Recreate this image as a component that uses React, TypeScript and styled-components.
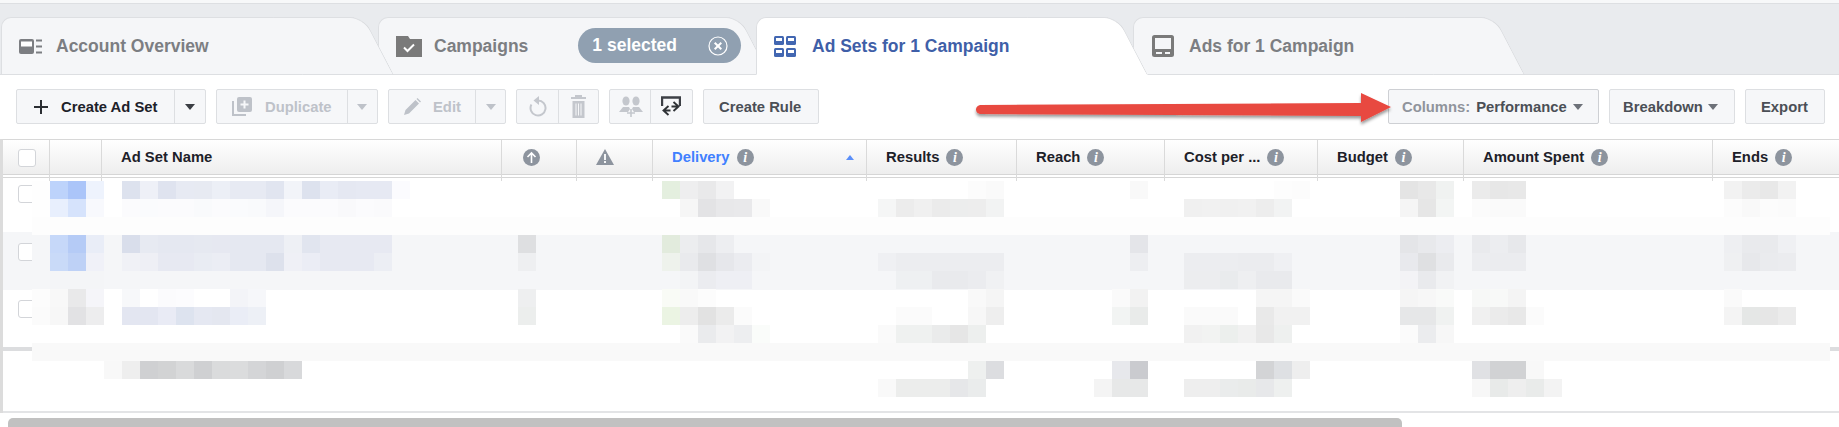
import React from 'react';
import styled, { createGlobalStyle } from 'styled-components';

const GlobalStyle = createGlobalStyle`
  html, body { margin: 0; padding: 0; background: #fff; overflow: hidden; }
  body { font-family: "Liberation Sans", Arial, sans-serif; width: 1839px; height: 427px; }
  * { box-sizing: border-box; }
`;

const Page = styled.div`width: 1839px; height: 427px; position: relative; overflow: hidden; background: #fff;`;
const TopStrip = styled.div`height: 4px; background: #f7f8f9; border-bottom: 1px solid #dddfe2;`;

const TabBar = styled.div`display: flex; height: 71px; padding-top: 13px; background: #e9ebee; border-bottom: 1px solid #dddfe2;`;

const Tab = styled.div<{ $active?: boolean; $z: number; $ml: number; $pl: number }>`
  position: relative;
  z-index: ${(p) => p.$z};
  width: ${(p) => (p.$z === 3 ? 393 : 392)}px;
  height: 58px;
  margin-left: ${(p) => p.$ml}px;
  padding-left: ${(p) => p.$pl}px;
  display: flex;
  align-items: center;
  font-size: 17.5px;
  font-weight: bold;
  color: ${(p) => (p.$active ? '#3f5fa8' : '#7c7e82')};
  &::before, &::after {
    content: '';
    position: absolute;
    top: 0;
    bottom: 0;
    z-index: -1;
    background: ${(p) => (p.$active ? '#fff' : '#f5f6f8')};
    border-top: 1px solid #dddfe2;
    border-bottom: 1px solid ${(p) => (p.$active ? '#fff' : '#dddfe2')};
  }
  &::before {
    left: 0;
    right: 40px;
    border-left: 1px solid #dddfe2;
    border-top-left-radius: 10px;
  }
  &::after {
    right: 0;
    width: 90px;
    border-right: 1px solid #d8dadd;
    border-top-right-radius: 14px;
    transform: skewX(27.5deg);
    transform-origin: bottom right;
  }
`;

const TabLabel = styled.span<{ $gap: number }>`margin-left: ${(p) => p.$gap}px; white-space: nowrap;`;

const Pill = styled.div`
  margin-left: 50px;
  width: 163px;
  height: 35px;
  margin-top: -1px;
  border-radius: 18px;
  background: #90a0b1;
  color: #fff;
  font-size: 17.5px;
  display: flex;
  align-items: center;
  justify-content: space-between;
  padding: 0 13px 0 14px;
`;

const Toolbar = styled.div`display: flex; height: 64px; padding: 14px 14px 0 16px; gap: 10px;`;
const Spacer = styled.div`flex: 1;`;

const BtnGroup = styled.div<{ $strong?: boolean }>`
  display: flex;
  height: 35px;
  background: #f6f7f9;
  border: 1px solid ${(p) => (p.$strong ? '#ced0d4' : '#dddfe2')};
  border-radius: 2px;
`;

const Segment = styled.div<{ $w: number; $pl: number; $color?: string }>`
  width: ${(p) => p.$w}px;
  padding-left: ${(p) => p.$pl}px;
  display: flex;
  align-items: center;
  font-size: 14.8px;
  font-weight: bold;
  white-space: nowrap;
  color: ${(p) => p.$color || '#4b4f56'};
  & + & { border-left: 1px solid #dddfe2; }
`;

const Gap = styled.span<{ $w: number }>`display: inline-block; width: ${(p) => p.$w}px;`;

const Caret = styled.i<{ $color: string; $ml?: number }>`
  display: inline-block;
  width: 0;
  height: 0;
  margin-left: ${(p) => p.$ml || 0}px;
  border-left: 5.5px solid transparent;
  border-right: 5.5px solid transparent;
  border-top: 6px solid ${(p) => p.$color};
`;

const Muted = styled.span`color: #90949c; margin-right: 6px;`;

const Table = styled.div`position: relative; height: 274px; border-top: 1px solid #d8d8d8; border-left: 3px solid #dcdcdc;`;

const HeaderRow = styled.div`
  display: grid;
  grid-template-columns: 47px 52px 400px 75px 76px 214px 150px 148px 153px 146px 249px 1fr;
  height: 37px;
  background: #fff;
  position: relative;
`;

const HeadCell = styled.div<{ $blue?: boolean; $pl?: number }>`
  height: 41px;
  padding-left: ${(p) => (p.$pl === undefined ? 19 : p.$pl)}px;
  display: flex;
  align-items: flex-start;
  padding-top: 9px;
  font-size: 14.8px;
  font-weight: bold;
  white-space: nowrap;
  color: ${(p) => (p.$blue ? '#4080ff' : '#1d2129')};
  border-right: 1px solid #dadada;
  position: relative;
  background:
    linear-gradient(to bottom, #fff 0, #eeeeee 34px, #d6d6d6 34px, #d6d6d6 35px, #fff 35px, #fff 37px, #d6d6d6 37px, #d6d6d6 38px, #fff 38px);
  &:last-child { border-right: none; }
`;

const InfoDot = styled.span`
  width: 17px;
  height: 17px;
  margin-left: 7px;
  border-radius: 50%;
  background: #8d949e;
  color: #fff;
  font-family: "Liberation Serif", serif;
  font-style: italic;
  font-weight: bold;
  font-size: 14px;
  line-height: 17px;
  text-align: center;
`;

const SortUp = styled.i`
  position: absolute;
  left: 193px;
  top: 15px;
  width: 0;
  height: 0;
  border-left: 4.5px solid transparent;
  border-right: 4.5px solid transparent;
  border-bottom: 5px solid #5b8ff9;
`;

const BodyRow = styled.div<{ $alt?: boolean; $h: number; $pad: number }>`
  height: ${(p) => p.$h}px;
  padding: ${(p) => p.$pad}px 0 0 15px;
  background: ${(p) => (p.$alt ? '#f5f6f8' : '#fff')};
`;

const Check = styled.div`
  width: 18px;
  height: 18px;
  background: #fff;
  border: 1px solid #d3d5d9;
  border-radius: 3px;
`;

const Divider = styled.div`height: 4px; background: #dcdddf;`;
const FooterRow = styled.div`height: 62px; background: #fff; border-bottom: 2px solid #e3e4e6;`;

const ScrollTrack = styled.div`margin: 5px 0 0 8px; width: 1394px; height: 9px; background: #c1c1c1; border-radius: 5px 5px 0 0;`;

const MosaicLayer = styled.svg`position: absolute; left: 29px; top: 41px; display: block; shape-rendering: crispEdges;`;
const ArrowLayer = styled.svg`position: absolute; left: 970px; top: 88px; overflow: visible;`;

const AccountIcon = () => (
  <svg width="23" height="15" viewBox="0 0 23 15">
    <rect width="15" height="15" rx="2" fill="#7c7e82" />
    <rect x="2" y="2.5" width="11" height="5" fill="#fff" />
    <path d="M17 1.5h6M17 7.5h6M17 13.5h6" stroke="#7c7e82" strokeWidth="2.2" />
  </svg>
);

const FolderIcon = () => (
  <svg width="26" height="21" viewBox="0 0 26 21">
    <path d="M0 0h12l2 3h12v18H0z" fill="#7a7a7a" />
    <path d="M8 11.5l3.5 3.5 6.5-6.5" fill="none" stroke="#fff" strokeWidth="2" />
  </svg>
);

const AdSetsIcon = () => (
  <svg width="22" height="21" viewBox="0 0 22 21">
    {[0, 12].map((x) =>
      [0, 12].map((y) => (
        <g key={`${x}-${y}`}>
          <rect x={x} y={y} width="10" height="9" rx="1.5" fill="#4267b2" />
          <rect x={x + 2} y={y + 2} width="6" height="3" fill="#fff" />
        </g>
      ))
    )}
  </svg>
);

const AdsIcon = () => (
  <svg width="22" height="22" viewBox="0 0 22 22">
    <rect width="22" height="22" rx="2.5" fill="#7a7a7a" />
    <rect x="3" y="3" width="16" height="11" fill="#f5f6f8" />
    <path d="M4 18h6M13 18h5" stroke="#f5f6f8" strokeWidth="2" />
  </svg>
);

const ClearIcon = () => (
  <svg width="20" height="20" viewBox="0 0 20 20">
    <circle cx="10" cy="10" r="9" fill="none" stroke="#fff" strokeWidth="1.2" />
    <path d="M6.7 6.7l6.6 6.6M13.3 6.7l-6.6 6.6" stroke="#fff" strokeWidth="2" />
  </svg>
);

const PlusIcon = () => (
  <svg width="14" height="14" viewBox="0 0 14 14">
    <path d="M7 0v14M0 7h14" stroke="#2b2e33" strokeWidth="2" />
  </svg>
);

const DuplicateIcon = () => (
  <svg width="20" height="19" viewBox="0 0 20 19">
    <path d="M1 4v14h13" fill="none" stroke="#bec2c9" strokeWidth="2" />
    <rect x="5" y="0" width="15" height="15" rx="2" fill="#bec2c9" />
    <path d="M12.5 3.5v8M8.5 7.5h8" stroke="#f6f7f9" strokeWidth="2" />
  </svg>
);

const PencilIcon = () => (
  <svg width="17" height="17" viewBox="0 0 17 17">
    <path d="M0 17l1.5-5L11.5 2l3.5 3.5-10 10zM12.5 1l1-1 3.5 3.5-1 1z" fill="#bec2c9" />
  </svg>
);

const UndoIcon = () => (
  <svg width="18" height="21" viewBox="0 0 18 21">
    <path d="M9 4.5a7.5 7.5 0 1 1-6.6 4" fill="none" stroke="#c4c7cd" strokeWidth="2" />
    <path d="M10 0v9L4.5 4.5z" fill="#c4c7cd" />
  </svg>
);

const TrashIcon = () => (
  <svg width="15" height="23" viewBox="0 0 15 23">
    <path d="M0 3h15M5 2.5V1h5v1.5" fill="none" stroke="#c4c7cd" strokeWidth="2" />
    <path d="M1.5 6h12v17h-12z" fill="#c4c7cd" />
    <path d="M5 8.5v12M7.5 8.5v12M10 8.5v12" stroke="#f6f7f9" strokeWidth="1" />
  </svg>
);

const PeopleIcon = () => (
  <svg width="24" height="21" viewBox="0 0 24 21">
    <g fill="#c4c7cd">
      <ellipse cx="7" cy="5" rx="3.6" ry="4.6" />
      <ellipse cx="17" cy="5" rx="3.6" ry="4.6" />
      <path d="M0 16l4-5h6l1 2-2 3zM24 16l-4-5h-6l-1 2 2 3z" />
    </g>
    <path d="M12 13v8M8 17h8" stroke="#c4c7cd" strokeWidth="1.6" />
  </svg>
);

const ShareIcon = () => (
  <svg width="20" height="21" viewBox="0 0 20 21">
    <path d="M1 10V1.5h18V10" fill="none" stroke="#3d4046" strokeWidth="2.4" />
    <path d="M7.5 10l-5 4.5 5 4.5M2.5 14.5h7M12.5 6l5 4.5-5 4.5M17.5 10.5h-7" fill="none" stroke="#2f3236" strokeWidth="1.9" />
  </svg>
);

const UpCircleIcon = () => (
  <svg width="17" height="17" viewBox="0 0 17 17">
    <circle cx="8.5" cy="8.5" r="8.5" fill="#8d949e" />
    <path d="M8.5 14V4M4.5 8l4-4 4 4" fill="none" stroke="#fff" strokeWidth="1.6" />
  </svg>
);

const WarnIcon = () => (
  <svg width="18" height="16" viewBox="0 0 18 16">
    <path d="M9 0l9 16H0z" fill="#8d949e" />
    <path d="M9 5v6M9 12v2" stroke="#fff" strokeWidth="1.8" />
  </svg>
);

const columns: { label: string; blue?: boolean }[] = [
  { label: 'Delivery', blue: true },
  { label: 'Results' },
  { label: 'Reach' },
  { label: 'Cost per ...' },
  { label: 'Budget' },
  { label: 'Amount Spent' },
  { label: 'Ends' },
];

// [row, first column, colours...] on an 18px grid, pixelated content of the table
const runs: [number, number, ...string[]][] = [
  [0, 0, 'fefefe'],
  [1, 0, 'fefefe'],
  [3, 0, 'f5f6f8'],
  [4, 0, 'f5f6f8'],
  [5, 0, 'f5f6f8', 'f4f5f7', 'f4f5f7', 'f4f5f7'],
  [0, 1, 'bdd3fb', 'abc5f9', 'eef3fd', 'ffffff', 'dde2ee', 'eef0f7', 'dfe3ef', 'e7eaf3', 'e7eaf2', 'eceff6', 'e7eaf3', 'e7eaf3', 'e1e5f0', 'f2f4f9', 'dde2ee', 'e9ecf5', 'e5e8f2', 'e6e9f3', 'e6e9f3', 'fbfbfe'],
  [0, 35, 'e4efdf', 'eeeeef', 'e9e9ea', 'f2f2f3'],
  [0, 52, 'fcfcfc', 'fafafa'],
  [0, 61, 'f9f9f9'],
  [0, 69, 'fdfdfd', 'fcfcfc'],
  [0, 76, 'e4e4e4', 'e8e8e8', 'f0f2f1'],
  [0, 80, 'ebebeb', 'e7e7e7', 'e8e8e8'],
  [0, 94, 'f2f2f2', 'ebebeb', 'e8e8e8', 'f2f2f2'],
  [1, 1, 'e8effd', 'd6e3fc', 'f8f9fd', 'ffffff', 'fbfbfd', 'fafbfd', 'fbfbfd', 'fbfbfd', 'f9fafc', 'fbfbfd', 'fafbfd', 'f9fafc', 'f5f6fa', 'fbfbfd', 'fbfbfd', 'fbfbfd', 'f9f9fb', 'fbfbfd', 'fafafc'],
  [1, 36, 'f6f6f6', 'e3e3e5', 'e8e8ea', 'e9e9eb', 'f9f9f9'],
  [1, 47, 'f5f6f6', 'ececec', 'f0f0f0', 'ebebeb', 'eceded', 'ededed', 'f2f3f3'],
  [1, 64, 'f0f0f0', 'f1f1f1', 'f0f0f0', 'f1f1f1', 'ededed', 'f2f3f3'],
  [1, 76, 'f5f5f5', 'e6e6e6', 'f3f5f4'],
  [1, 80, 'fbfbfb', 'fafafa', 'fafafa'],
  [1, 94, 'fcfcfc', 'f9f9f9', 'fcfcfc', 'fbfbfb'],
  [3, 1, 'c6d8f9', 'b5cbf6', 'e9edf7', 'f5f6f8', 'd9deeb', 'e7eaf2', 'e5e8f1', 'e5e8f1', 'e6e9f1', 'e6e8f1', 'e5e8f1', 'e5e8f1', 'e5e8f1', 'eef0f5', 'e1e5ef', 'e7e9f2', 'e7e9f2', 'e7e9f2', 'e7e9f2'],
  [3, 27, 'dedfe1'],
  [3, 35, 'e2ebdd', 'ecedef', 'e6e7ea', 'edeef1'],
  [3, 61, 'e4e5e9'],
  [3, 76, 'e4e5e8', 'e8e9ec', 'ecedf1'],
  [3, 80, 'e9eaed', 'ecedf0', 'e7e8eb'],
  [3, 94, 'eeeff2', 'e9eaed', 'e9eaed', 'eff0f3'],
  [4, 1, 'c9daf8', 'bed1f6', 'f0f1f8', 'f5f6f8', 'f0f1f6', 'eeeff5', 'e7e9f2', 'e7e9f2', 'e9ecf3', 'ebedf4', 'e5e8f1', 'e5e8f1', 'dde1ec', 'eff0f6', 'ebedf5', 'e7e9f2', 'e7e9f2', 'e7e9f2', 'eceef4'],
  [4, 27, 'eeeff1'],
  [4, 35, 'eef2ec', 'e9eaed', 'dfe0e3', 'e6e7eb', 'ebecf0', 'f3f4f6'],
  [4, 47, 'eff0f3', 'ecedf0', 'ecedf0', 'ecedf0', 'ecedf0', 'ecedf0', 'ecedf0'],
  [4, 61, 'edeef1'],
  [4, 64, 'ecedf0', 'ecedf0', 'ecedf0', 'ebecef', 'ebecef', 'eff0f3'],
  [4, 76, 'e8e9ed', 'dfe0e2', 'e9eaed'],
  [4, 80, 'ecedf0', 'ebecef', 'ebecef'],
  [4, 94, 'eff0f2', 'e7e8eb', 'eaebee', 'ebecef'],
  [5, 36, 'f3f4f6', 'ebecf0', 'eeeff4', 'eeeff4'],
  [5, 48, 'eef0f2', 'eef0f2', 'e9eaed', 'e9eaed', 'ebecef', 'f0f1f3'],
  [5, 64, 'ecedef', 'ecedef', 'e9ebed', 'eeeff1', 'e9eaed', 'e9eaed'],
  [5, 76, 'f3f3f6', 'e9eaed', 'f1f2f4'],
  [6, 0, 'fcfcfc', 'f8f8f8', 'e9e9ea', 'f5f5f9', 'ffffff', 'f7f8fa', 'ffffff', 'fbfbfd', 'fcfcfe', 'ffffff', 'ffffff', 'f3f4f8', 'f6f7fa'],
  [6, 27, 'eeeff0'],
  [6, 35, 'f9fbf6', 'f9f9f9', 'fcfcfc'],
  [6, 52, 'f9f9f9', 'f5f5f5'],
  [6, 60, 'fafafa', 'f2f2f2'],
  [6, 68, 'f5f5f5', 'f5f5f5', 'fafafa'],
  [6, 76, 'f5f5f5', 'f7f7f7', 'f9faf9'],
  [6, 80, 'f7f8f7', 'f8f9f8', 'f4f4f4'],
  [6, 94, 'fafafa'],
  [7, 0, 'fbfbfb', 'f7f7f7', 'e2e2e4', 'ededee', 'ffffff', 'e3e6f1', 'e3e6f1', 'e9ebf5', 'dde3ef', 'e5e8f2', 'e4e7f0', 'eaedf6', 'edf0f6'],
  [7, 27, 'eceeed'],
  [7, 35, 'ebf4e3', 'ededed', 'e2e2e2', 'ebebeb', 'fbfbfb'],
  [7, 48, 'fbfbfb', 'fbfbfb'],
  [7, 52, 'f7f7f7', 'eeeeee'],
  [7, 60, 'f2f4f3', 'e9ebea'],
  [7, 64, 'fafafa', 'fafafa', 'fafafa'],
  [7, 68, 'e9e9e9', 'f1f1f1', 'f1f1f1'],
  [7, 76, 'e6e7e8', 'e6e7e8', 'f0f2f1'],
  [7, 80, 'f0f0f0', 'ebebeb', 'e8e8e8', 'fbfbfb'],
  [7, 94, 'f4f4f4', 'e5e7e6', 'e6e6e6', 'ebebeb'],
  [8, 36, 'fafafa', 'eaebed', 'f2f2f3', 'edeef0', 'fafcfa'],
  [8, 47, 'fafafa', 'eff1f0', 'eff1f0', 'eaebeb', 'e6e6e6', 'edefee'],
  [8, 64, 'f1f1f1', 'f2f3f2', 'ecefed', 'f1f1f1', 'e8e8e8', 'eef0ef'],
  [8, 76, 'fbfbfb', 'ebecee', 'f7f7f7'],
  [10, 4, 'f8f8f8', 'eeeeee', 'cfd0d2', 'd2d3d4', 'd9dadb', 'cfd0d2', 'dadbdc', 'dbdcdd', 'd4d5d7', 'cfd0d2', 'd8d9db'],
  [10, 52, 'eef0ef', 'dcdde0'],
  [10, 60, 'e7e8ec', 'cacbcf'],
  [10, 68, 'd3d4d6', 'dee0e3', 'eeeeee'],
  [10, 80, 'e0e1e4', 'd1d2d4', 'd1d2d4', 'f8f8f8'],
  [11, 47, 'f9f9f9', 'ecedec', 'ecedec', 'ecedec', 'e6e7e9', 'eaecec'],
  [11, 59, 'f4f4f4', 'e7e8e8', 'e7e8e8'],
  [11, 64, 'eeeeee', 'eeeeee', 'eaecec', 'e9ebea', 'e7e8ea', 'eef0ef'],
  [11, 80, 'f7f7f7', 'e8eae9', 'eeeeee', 'e9ebea', 'f3f3f3'],
];

const CELL = 18;

const Mosaic = () => (
  <MosaicLayer width={1798} height={230} viewBox="0 0 1798 230">
    <rect x="0" y={2 * CELL} width="1798" height={CELL} fill="#fdfdfd" />
    <rect x="0" y={9 * CELL} width="1798" height={CELL} fill="#f9f9f9" />
    {runs.map(([row, col, ...colours]) =>
      colours.map((c, i) => (
        <rect key={`${row}-${col + i}`} x={(col + i) * CELL} y={row * CELL} width={CELL} height={CELL} fill={`#${c}`} />
      ))
    )}
  </MosaicLayer>
);

const RedArrow = () => (
  <ArrowLayer width="424" height="40" viewBox="0 0 424 40">
    <defs>
      <filter id="arrowShadow" x="-5%" y="-40%" width="110%" height="200%">
        <feDropShadow dx="0" dy="2.5" stdDeviation="1.5" floodColor="#000" floodOpacity="0.4" />
      </filter>
    </defs>
    <path
      d="M10 17 L391 15 L391 5 L421 19 L391 34 L391 28 L10 26 Q6 25 6 21.5 Q6 18 10 17 Z"
      fill="#e8483f"
      filter="url(#arrowShadow)"
    />
  </ArrowLayer>
);

const App = () => (
  <Page>
    <GlobalStyle />
    <TopStrip />
    <TabBar>
      <Tab $z={3} $ml={1} $pl={18}>
        <AccountIcon />
        <TabLabel $gap={14}>Account Overview</TabLabel>
      </Tab>
      <Tab $z={2} $ml={-16} $pl={18}>
        <FolderIcon />
        <TabLabel $gap={12}>Campaigns</TabLabel>
        <Pill>
          1 selected
          <ClearIcon />
        </Pill>
      </Tab>
      <Tab $active $z={4} $ml={-14} $pl={18}>
        <AdSetsIcon />
        <TabLabel $gap={16}>Ad Sets for 1 Campaign</TabLabel>
      </Tab>
      <Tab $z={1} $ml={-15} $pl={19}>
        <AdsIcon />
        <TabLabel $gap={15}>Ads for 1 Campaign</TabLabel>
      </Tab>
    </TabBar>

    <Toolbar>
      <BtnGroup>
        <Segment $w={157} $pl={17} $color="#1d2129">
          <PlusIcon />
          <Gap $w={13} />
          Create Ad Set
        </Segment>
        <Segment $w={31} $pl={10}>
          <Caret $color="#3b3e44" />
        </Segment>
      </BtnGroup>
      <BtnGroup>
        <Segment $w={130} $pl={15} $color="#bec2c9">
          <DuplicateIcon />
          <Gap $w={13} />
          Duplicate
        </Segment>
        <Segment $w={30} $pl={9}>
          <Caret $color="#bec2c9" />
        </Segment>
      </BtnGroup>
      <BtnGroup>
        <Segment $w={86} $pl={15} $color="#bec2c9">
          <PencilIcon />
          <Gap $w={12} />
          Edit
        </Segment>
        <Segment $w={30} $pl={10}>
          <Caret $color="#bec2c9" />
        </Segment>
      </BtnGroup>
      <BtnGroup>
        <Segment $w={41} $pl={12}>
          <UndoIcon />
        </Segment>
        <Segment $w={40} $pl={12}>
          <TrashIcon />
        </Segment>
      </BtnGroup>
      <BtnGroup>
        <Segment $w={40} $pl={9}>
          <PeopleIcon />
        </Segment>
        <Segment $w={42} $pl={10}>
          <ShareIcon />
        </Segment>
      </BtnGroup>
      <BtnGroup>
        <Segment $w={114} $pl={15}>Create Rule</Segment>
      </BtnGroup>
      <Spacer />
      <BtnGroup $strong>
        <Segment $w={209} $pl={13}>
          <Muted>Columns:</Muted>
          Performance
          <Caret $color="#6d7179" $ml={6} />
        </Segment>
      </BtnGroup>
      <BtnGroup>
        <Segment $w={124} $pl={13}>
          Breakdown
          <Caret $color="#6d7179" $ml={5} />
        </Segment>
      </BtnGroup>
      <BtnGroup>
        <Segment $w={78} $pl={15}>Export</Segment>
      </BtnGroup>
    </Toolbar>

    <Table>
      <HeaderRow>
        <HeadCell $pl={15}><Check /></HeadCell>
        <HeadCell />
        <HeadCell>Ad Set Name</HeadCell>
        <HeadCell $pl={21}><UpCircleIcon /></HeadCell>
        <HeadCell $pl={19}><WarnIcon /></HeadCell>
        {columns.map((c) => (
          <HeadCell key={c.label} $blue={c.blue}>
            {c.label}
            <InfoDot>i</InfoDot>
            {c.blue && <SortUp />}
          </HeadCell>
        ))}
      </HeaderRow>
      <BodyRow $h={55} $pad={8}><Check /></BodyRow>
      <BodyRow $alt $h={58} $pad={11}><Check /></BodyRow>
      <BodyRow $h={57} $pad={10}><Check /></BodyRow>
      <Divider />
      <FooterRow />
      <Mosaic />
    </Table>
    <ScrollTrack />
    <RedArrow />
  </Page>
);

export default App;
